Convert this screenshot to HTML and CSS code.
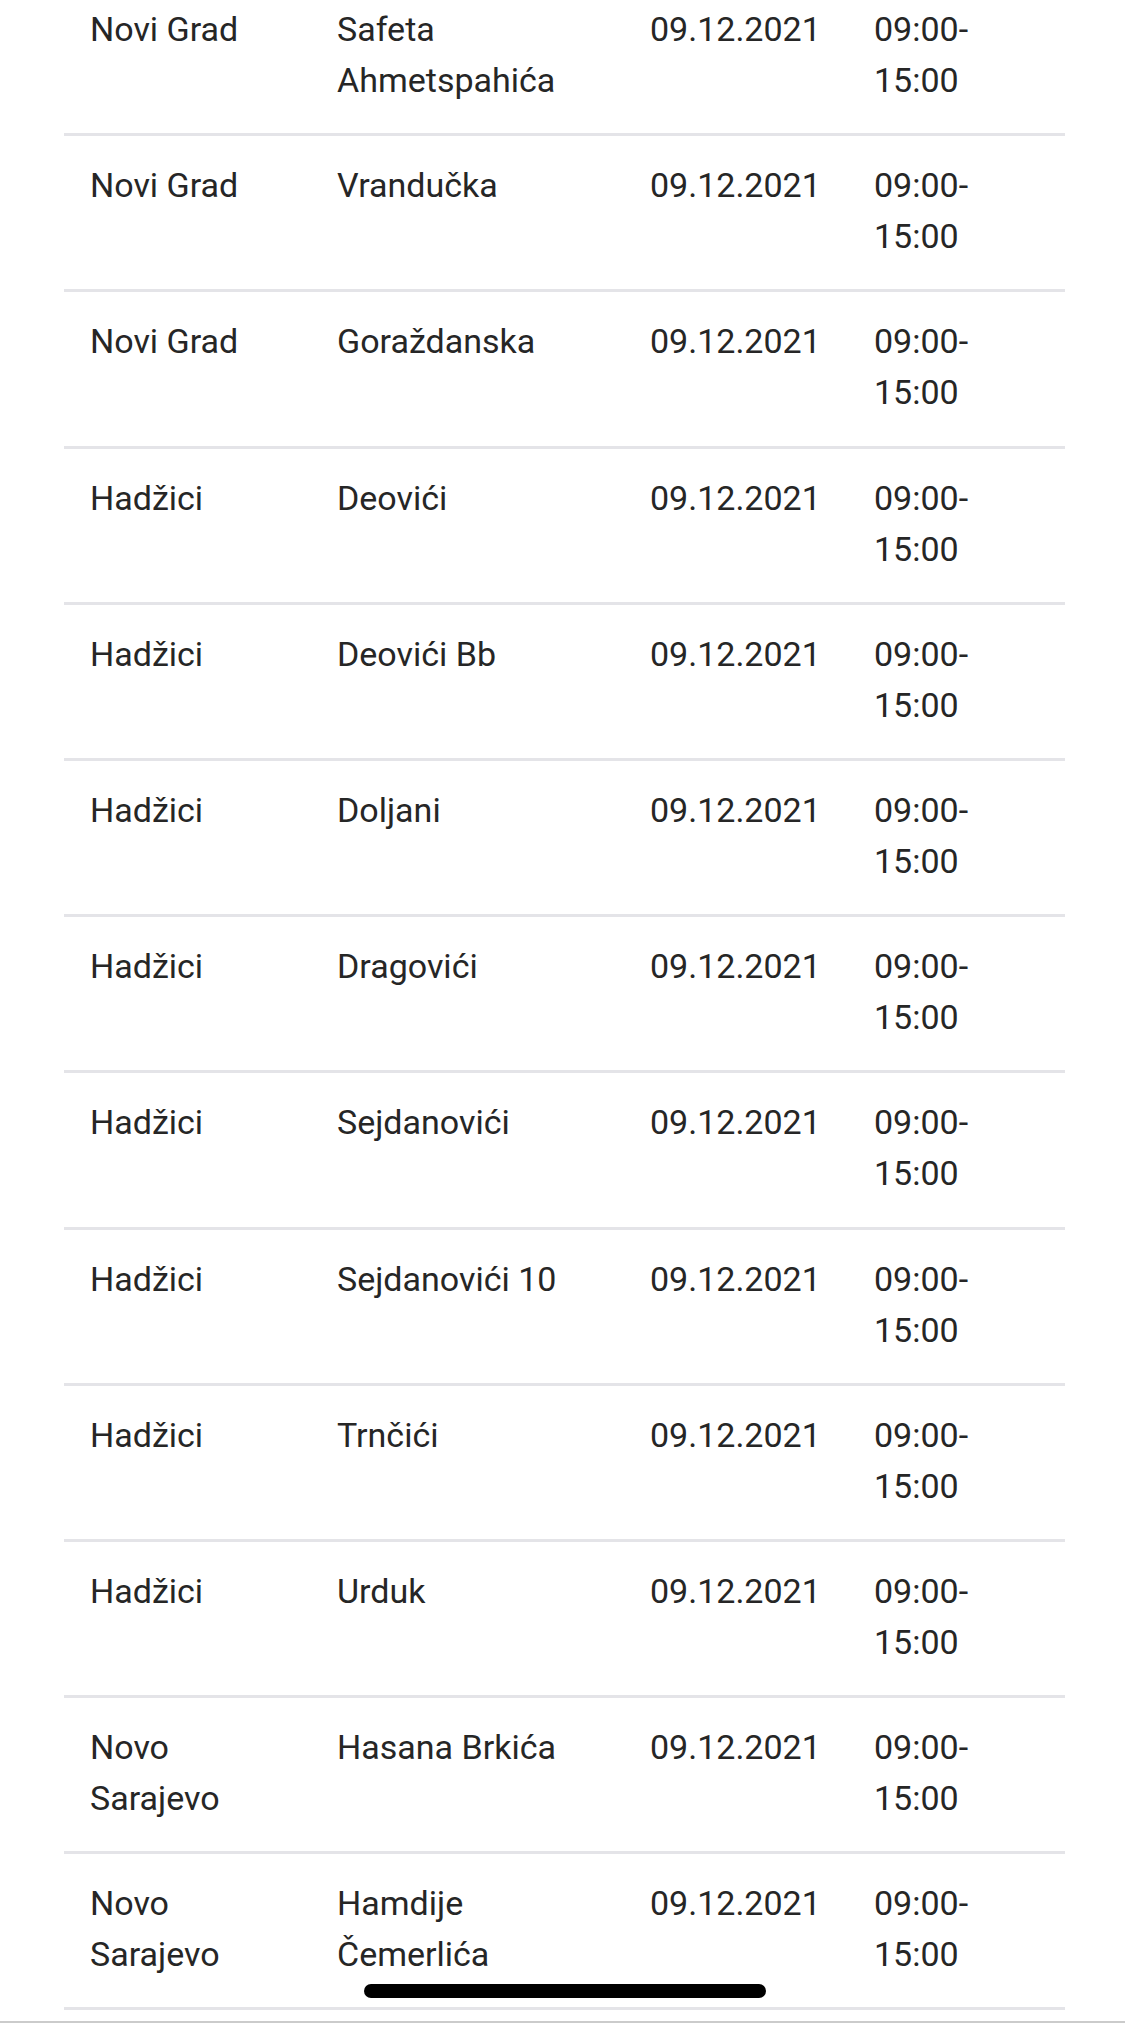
FILE: index.html
```html
<!DOCTYPE html>
<html lang="bs">
<head>
<meta charset="utf-8">
<title>Raspored</title>
<link rel="stylesheet" href="styles.css">
</head>
<body>
<div class="table">
  <div class="row"><div class="c1">Novi Grad</div><div class="c2">Safeta Ahmetspahića</div><div class="c3">09.12.2021</div><div class="c4">09:00-15:00</div></div>
  <div class="row"><div class="c1">Novi Grad</div><div class="c2">Vrandučka</div><div class="c3">09.12.2021</div><div class="c4">09:00-15:00</div></div>
  <div class="row"><div class="c1">Novi Grad</div><div class="c2">Goraždanska</div><div class="c3">09.12.2021</div><div class="c4">09:00-15:00</div></div>
  <div class="row"><div class="c1">Hadžici</div><div class="c2">Deovići</div><div class="c3">09.12.2021</div><div class="c4">09:00-15:00</div></div>
  <div class="row"><div class="c1">Hadžici</div><div class="c2">Deovići Bb</div><div class="c3">09.12.2021</div><div class="c4">09:00-15:00</div></div>
  <div class="row"><div class="c1">Hadžici</div><div class="c2">Doljani</div><div class="c3">09.12.2021</div><div class="c4">09:00-15:00</div></div>
  <div class="row"><div class="c1">Hadžici</div><div class="c2">Dragovići</div><div class="c3">09.12.2021</div><div class="c4">09:00-15:00</div></div>
  <div class="row"><div class="c1">Hadžici</div><div class="c2">Sejdanovići</div><div class="c3">09.12.2021</div><div class="c4">09:00-15:00</div></div>
  <div class="row"><div class="c1">Hadžici</div><div class="c2">Sejdanovići 10</div><div class="c3">09.12.2021</div><div class="c4">09:00-15:00</div></div>
  <div class="row"><div class="c1">Hadžici</div><div class="c2">Trnčići</div><div class="c3">09.12.2021</div><div class="c4">09:00-15:00</div></div>
  <div class="row"><div class="c1">Hadžici</div><div class="c2">Urduk</div><div class="c3">09.12.2021</div><div class="c4">09:00-15:00</div></div>
  <div class="row"><div class="c1">Novo Sarajevo</div><div class="c2">Hasana Brkića</div><div class="c3">09.12.2021</div><div class="c4">09:00-15:00</div></div>
  <div class="row"><div class="c1">Novo Sarajevo</div><div class="c2">Hamdije Čemerlića</div><div class="c3">09.12.2021</div><div class="c4">09:00-15:00</div></div>
</div>
<div class="home-indicator"></div>
<div class="screen-edge"></div>
</body>
</html>
```

FILE: styles.css
```css
html, body {
  margin: 0;
  padding: 0;
  background: #ffffff;
}

body {
  font-family: Roboto, "Noto Sans", "Liberation Sans", sans-serif;
  font-size: 34px;
  line-height: 51px;
  color: #262626;
  height: 2023px;
  overflow: hidden;
}

.table {
  margin: -20px 0 0 64px;
  width: 1001px;
}

.row {
  display: grid;
  grid-template-columns: 247px 313px 224px 191px;
  padding: 24px 0 27.2px 26px;
  border-bottom: 3px solid #e4e4e8;
}

.c1 { padding-right: 50px; }
.c2 { padding-right: 50px; }
.c3 { padding-right: 20px; }
.c4 { padding-right: 40px; }

.home-indicator {
  position: fixed;
  left: 364px;
  bottom: 25px;
  width: 402px;
  height: 14px;
  border-radius: 7px;
  background: #000000;
}

.screen-edge {
  position: fixed;
  left: 0;
  right: 0;
  bottom: 0;
  height: 2px;
  background: #cbcbcb;
}
```
